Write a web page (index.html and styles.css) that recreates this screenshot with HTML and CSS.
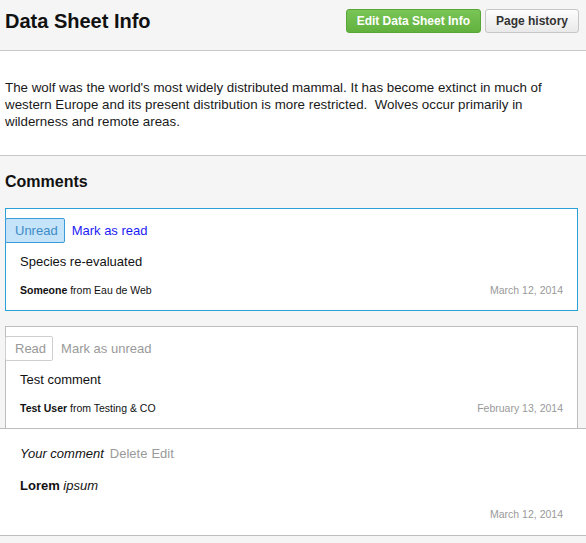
FILE: index.html
```html
<!DOCTYPE html>
<html lang="en">
<head>
<meta charset="utf-8">
<title>Data Sheet Info</title>
<link rel="stylesheet" href="styles.css">
</head>
<body>
<header class="page-header">
  <h1 class="page-title">Data Sheet Info</h1>
  <div class="actions">
    <a class="btn btn-success" href="#">Edit Data Sheet Info</a>
    <a class="btn btn-default" href="#">Page history</a>
  </div>
</header>

<section class="description">
  <p>The wolf was the world's most widely distributed mammal. It has become extinct in much of western Europe and its present distribution is more restricted.&nbsp; Wolves occur primarily in wilderness and remote areas.</p>
</section>

<section class="comments">
  <h2 class="comments-title">Comments</h2>

  <div class="comment comment-unread">
    <div class="comment-actions">
      <span class="badge badge-unread">Unread</span>
      <a class="link link-primary" href="#">Mark as read</a>
    </div>
    <div class="comment-text">Species re-evaluated</div>
    <div class="comment-meta">
      <span class="author"><b>Someone</b> from Eau de Web</span>
      <span class="date">March 12, 2014</span>
    </div>
  </div>

  <div class="comment comment-read">
    <div class="comment-actions">
      <span class="badge badge-read">Read</span>
      <a class="link link-muted" href="#">Mark as unread</a>
    </div>
    <div class="comment-text">Test comment</div>
    <div class="comment-meta">
      <span class="author"><b>Test User</b> from Testing &amp; CO</span>
      <span class="date">February 13, 2014</span>
    </div>
  </div>

  <div class="own-comment">
    <div class="comment-actions own-actions">
      <em class="own-label">Your comment</em>
      <a class="link link-muted" href="#">Delete</a>
      <a class="link link-muted" href="#">Edit</a>
    </div>
    <div class="own-text"><b>Lorem</b> <em>ipsum</em></div>
    <div class="comment-meta own-meta">
      <span class="date">March 12, 2014</span>
    </div>
  </div>
</section>
</body>
</html>
```

FILE: styles.css
```css
html, body {
  margin: 0;
  padding: 0;
}

body {
  font-family: "Liberation Sans", Arial, sans-serif;
  font-size: 13px;
  color: #222;
  background: #f5f5f5;
}

a {
  text-decoration: none;
}

.page-header {
  box-sizing: border-box;
  height: 51px;
  display: flex;
  justify-content: space-between;
  align-items: flex-start;
  padding: 9px 7px 0 5px;
  background: #f5f5f5;
  border-bottom: 1px solid #c8c8c8;
}

.page-title {
  margin: 0;
  font-size: 20px;
  line-height: 24px;
  font-weight: bold;
  color: #111;
}

.actions {
  display: flex;
  gap: 4px;
}

.btn {
  display: block;
  height: 24px;
  box-sizing: border-box;
  padding: 0 10px;
  line-height: 22px;
  font-size: 12px;
  font-weight: bold;
  border: 1px solid;
  border-radius: 3px;
}

.btn-success {
  color: #fff;
  background: linear-gradient(#79c556, #62b13f);
  border-color: #58a538;
}

.btn-default {
  color: #333;
  background: linear-gradient(#fdfdfd, #e9e9e9);
  border-color: #c6c6c6;
}

.description {
  background: #fff;
  padding: 28px 8px 25px 5px;
  border-bottom: 1px solid #c8c8c8;
}

.description p {
  margin: 0;
  font-size: 13.33px;
  line-height: 17px;
  color: #1a1a1a;
}

.comments {
  padding-top: 16px;
  padding-bottom: 7px;
}

.comments-title {
  margin: 0 0 16px 5px;
  font-size: 16px;
  line-height: 20px;
  font-weight: bold;
  color: #111;
}

.comment {
  margin: 0 8px 15px 5px;
  padding: 9px 14px 13px 0;
  background: #fff;
  border: 1px solid #bdbdbd;
}

.comment-unread {
  border-color: #2ba1d7;
}

.comment-read {
  margin-bottom: 0;
}

.comment-actions {
  display: flex;
  align-items: center;
  height: 25px;
}

.badge {
  box-sizing: border-box;
  height: 25px;
  line-height: 23px;
  padding: 0 6px 0 9px;
  margin-left: -1px;
  border: 1px solid;
  border-radius: 2px;
}

.badge-unread {
  background: #c5e3f9;
  border-color: #3a9bd7;
  color: #3f8cc6;
}

.badge-read {
  background: #fff;
  border-color: #cfcfcf;
  color: #999;
}

.link {
  margin-left: 7px;
}

.badge-read + .link {
  margin-left: 8px;
}

.link-primary {
  color: #1c1cf5;
}

.link-muted {
  color: #9a9a9a;
}

.comment-text {
  margin: 10px 0 0 14px;
  line-height: 17px;
  color: #111;
}

.comment-meta {
  display: flex;
  justify-content: space-between;
  margin: 13px 0 0 14px;
  font-size: 10.5px;
  line-height: 14px;
}

.author {
  color: #111;
}

.date {
  color: #999;
}

.own-comment {
  margin-top: -1px;
  padding: 12px 23px 14px 20px;
  background: #fff;
  border-top: 1px solid #bdbdbd;
  border-bottom: 1px solid #bdbdbd;
}

.own-label {
  color: #111;
}

.own-actions .link {
  margin-left: 6px;
}

.own-actions .link + .link {
  margin-left: 4px;
}

.own-text {
  margin-top: 11px;
  line-height: 17px;
  color: #111;
}

.own-meta {
  margin: 13px 0 0;
  justify-content: flex-end;
}
```
